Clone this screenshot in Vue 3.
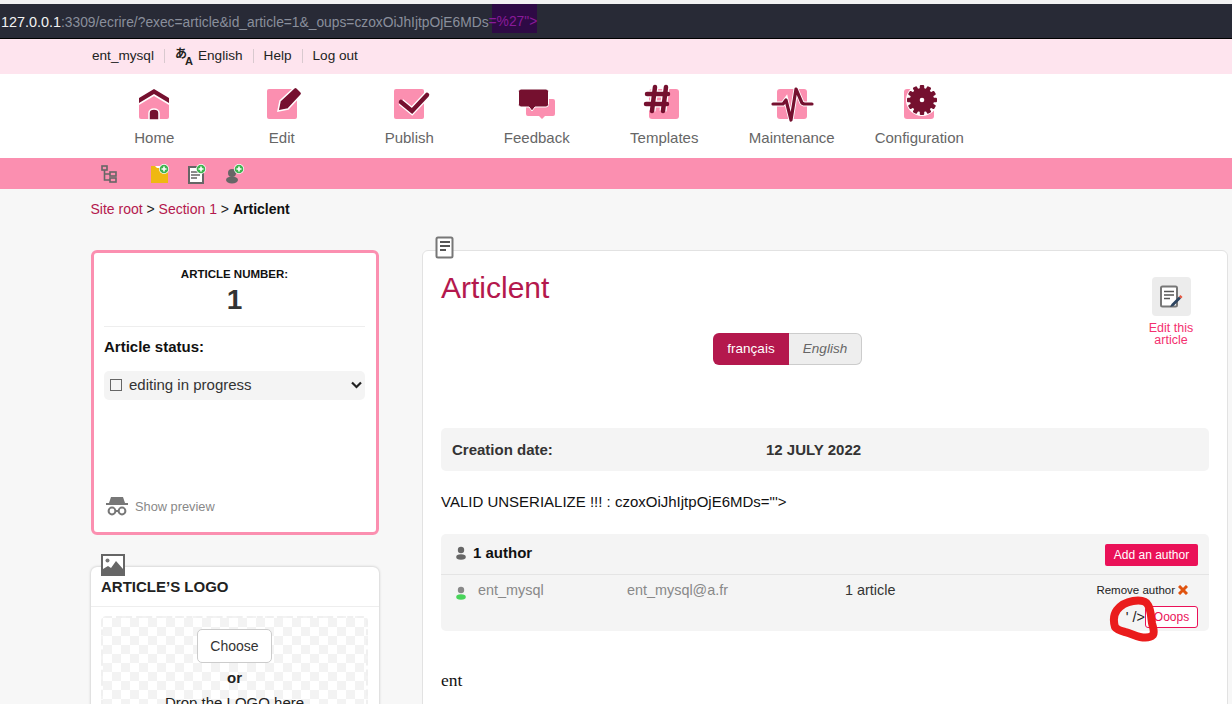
<script setup>
const menu = [
  { label: 'Home', icon: 'home' },
  { label: 'Edit', icon: 'edit' },
  { label: 'Publish', icon: 'publish' },
  { label: 'Feedback', icon: 'feedback' },
  { label: 'Templates', icon: 'templates' },
  { label: 'Maintenance', icon: 'maintenance' },
  { label: 'Configuration', icon: 'config' },
];

const gearTeeth = [0, 30, 60, 90, 120, 150];
</script>

<template>
  <div class="page">
    <div class="urlbar">
      <span class="url-host">127.0.0.1</span><span class="url-rest">:3309/ecrire/?exec=article&amp;id_article=1&amp;_oups=czoxOiJhIjtpOjE6MDs</span><span class="url-mark">=%27"&gt;</span>
    </div>

    <div class="topbar">
      <span class="top-item">ent_mysql</span>
      <span class="top-item">
        <svg class="lang-icon" width="20" height="24" viewBox="0 0 20 24">
          <text x="0" y="14" font-size="12" font-weight="700" fill="#222" font-family="Noto Sans CJK JP, sans-serif">あ</text>
          <text x="10" y="21" font-size="11" font-weight="700" fill="#222" font-family="Liberation Sans, sans-serif">A</text>
        </svg>
        English
      </span>
      <span class="top-item">Help</span>
      <span class="top-item last">Log out</span>
    </div>

    <nav class="mainnav">
      <div v-for="item in menu" :key="item.label" class="nav-item">
        <svg class="nav-icon" width="48" height="40" viewBox="0 0 48 40">
          <template v-if="item.icon === 'home'">
            <path d="M9 23 24 14l15 9v12a2 2 0 0 1-2 2H11a2 2 0 0 1-2-2z" fill="#fb8fb0" />
            <path d="M9 16 24 7l15 9v5L24 12 9 21z" fill="#75102f" />
            <path d="M19 38V31a5 4 0 0 1 10 0v7z" fill="#75102f" stroke="#fff" stroke-width="1.500" />
          </template>
          <template v-else-if="item.icon === 'edit'">
            <rect x="9" y="7" width="30" height="30" rx="2" fill="#fb8fb0" />
            <path d="M20 29l2-10L36 6c1-1 2-1 3 0l4 4c1 1 1 2 0 3L30 27z" fill="#75102f" stroke="#fff" stroke-width="1.500" />
          </template>
          <template v-else-if="item.icon === 'publish'">
            <rect x="9" y="7" width="30" height="30" rx="2" fill="#fb8fb0" />
            <path d="M16 20l11 9 15-16" fill="none" stroke="#fff" stroke-width="7" />
            <path d="M16 20l11 9 15-16" fill="none" stroke="#75102f" stroke-width="4.500" stroke-linecap="round" />
          </template>
          <template v-else-if="item.icon === 'feedback'">
            <path d="M15 17h25a2 2 0 0 1 2 2v13a2 2 0 0 1-2 2h-8l-3 3-3-3H15a2 2 0 0 1-2-2V19z" fill="#fb8fb0" />
            <path d="M8 7h25a2.500 2.500 0 0 1 2.500 2.500v13a2.500 2.500 0 0 1-2.500 2.500H22l-3 4-3-4H8a2.500 2.500 0 0 1-2.500-2.500v-13A2.500 2.500 0 0 1 8 7z" fill="#75102f" stroke="#fff" stroke-width="1" />
          </template>
          <template v-else-if="item.icon === 'templates'">
            <rect x="9" y="7" width="30" height="30" rx="3" fill="#fb8fb0" />
            <path d="M15 5l-3 24M26 5l-3 24M7 12h21M6 22h21" fill="none" stroke="#fff" stroke-width="7" />
            <path d="M15 5l-3 24M26 5l-3 24M7 12h21M6 22h21" fill="none" stroke="#75102f" stroke-width="4.500" stroke-linecap="round" />
          </template>
          <template v-else-if="item.icon === 'maintenance'">
            <rect x="9" y="7" width="30" height="30" rx="3" fill="#fb8fb0" />
            <path d="M5 22h10l3-4 5 20 5-31 6 14 2 1h8" fill="none" stroke="#fff" stroke-width="5" />
            <path d="M5 22h10l3-4 5 20 5-31 6 14 2 1h8" fill="none" stroke="#75102f" stroke-width="3.200" stroke-linecap="round" stroke-linejoin="round" />
          </template>
          <template v-else>
            <rect x="9" y="7" width="30" height="30" rx="3" fill="#fb8fb0" />
            <g transform="translate(27 18)">
              <circle r="16" fill="#fff" />
              <rect v-for="a in gearTeeth" :key="a" x="-2.200" y="-15" width="4.400" height="30" rx="1" fill="#75102f" :transform="`rotate(${a})`" />
              <circle r="12" fill="#75102f" />
              <circle r="2.300" fill="#fff" />
            </g>
          </template>
        </svg>
        <span class="nav-label">{{ item.label }}</span>
      </div>
    </nav>

    <div class="quickbar">
      <svg class="qb-tree" width="18" height="18" viewBox="0 0 18 18" fill="none" stroke="#666" stroke-width="1.600">
        <rect x="2" y="1" width="5" height="4" />
        <rect x="10" y="7" width="6" height="4" />
        <rect x="10" y="13" width="6" height="4" />
        <path d="M4.500 5v10H10M4.500 9H10" />
      </svg>
      <svg class="qb-section" width="20" height="20" viewBox="0 0 20 20">
        <path d="M1 2h17v17H1z" fill="#efb811" />
        <path d="M5 2h7v2H7z" fill="#fff" />
        <circle cx="14" cy="5" r="5" fill="#fff" />
        <circle cx="14" cy="5" r="4.300" fill="#3fb34f" />
        <path d="M14 2.500v5M11.500 5h5" stroke="#fff" stroke-width="1.600" />
      </svg>
      <svg class="qb-article" width="20" height="20" viewBox="0 0 20 20">
        <rect x="2" y="3" width="14" height="16" fill="#fff" stroke="#666" stroke-width="2" />
        <path d="M4 8h9M4 11h9M4 14h6" stroke="#666" stroke-width="1.600" />
        <circle cx="14" cy="5" r="5" fill="#fff" />
        <circle cx="14" cy="5" r="4.300" fill="#3fb34f" />
        <path d="M14 2.500v5M11.500 5h5" stroke="#fff" stroke-width="1.600" />
      </svg>
      <svg class="qb-author" width="20" height="20" viewBox="0 0 20 20">
        <circle cx="7" cy="9" r="4" fill="#666" />
        <ellipse cx="7" cy="16" rx="6" ry="3.400" fill="#666" />
        <circle cx="14" cy="5" r="5" fill="#fff" />
        <circle cx="14" cy="5" r="4.300" fill="#3fb34f" />
        <path d="M14 2.500v5M11.500 5h5" stroke="#fff" stroke-width="1.600" />
      </svg>
    </div>

    <div class="crumbs">
      <a>Site root</a> &gt; <a>Section 1</a> &gt; <strong>Articlent</strong>
    </div>

    <div class="columns">
      <aside class="sidebar">
        <div class="status-box">
          <div class="num-label">ARTICLE NUMBER:</div>
          <div class="num-value">1</div>
          <div class="status-title">Article status:</div>
          <div class="status-select">
            <span class="check"></span>
            <span class="select-text">editing in progress</span>
            <svg width="11" height="8" viewBox="0 0 11 8" fill="none" stroke="#222" stroke-width="2.200">
              <path d="M1 1.500l4.500 4.500L10 1.500" />
            </svg>
          </div>
          <div class="preview">
            <svg width="22" height="20" viewBox="0 0 22 20">
              <path d="M5 1h12l2 6H3z" fill="#777" />
              <rect x="0" y="7" width="22" height="2" fill="#777" />
              <g fill="none" stroke="#777" stroke-width="2">
                <circle cx="6" cy="15" r="3.400" />
                <circle cx="16" cy="15" r="3.400" />
                <path d="M9.500 15h3" />
              </g>
            </svg>
            <span>Show preview</span>
          </div>
        </div>

        <div class="logo-box">
          <svg class="logo-badge" width="24" height="22" viewBox="0 0 24 22">
            <rect x="1" y="1" width="22" height="20" fill="#fff" stroke="#666" stroke-width="2" />
            <circle cx="6.500" cy="6.500" r="2" fill="#777" />
            <path d="M2 15l5-3 3 2 5-7 7 8v5H2z" fill="#666" />
          </svg>
          <div class="logo-title">ARTICLE’S LOGO</div>
          <div class="logo-body">
            <div class="drop">
              <button class="choose">Choose</button>
              <div class="or">or</div>
              <div class="drop-text">Drop the LOGO here</div>
            </div>
          </div>
        </div>
      </aside>

      <main class="article">
        <svg class="article-badge" width="20" height="23" viewBox="0 0 20 23">
          <rect x="1.500" y="1.500" width="16" height="20" rx="1.500" fill="#fff" stroke="#777" stroke-width="2" />
          <path d="M5 6h10M5 10h10M5 14h6" stroke="#555" stroke-width="1.800" />
        </svg>

        <div class="article-head">
          <h1>Articlent</h1>
          <div class="edit-link">
            <div class="edit-icon">
              <svg width="24" height="24" viewBox="0 0 24 24">
                <rect x="2" y="1.500" width="16" height="20" rx="1.500" fill="#fff" stroke="#777" stroke-width="2" />
                <path d="M5 6.500h10M5 10h10M5 13.500h6" stroke="#555" stroke-width="1.600" />
                <path d="M11 22l1.500-3 7.500-7.500 2 2-7.500 7.500z" fill="#2c4460" />
                <path d="M20 11.500l1.500-1.500 2 2-1.500 1.500z" fill="#e5533d" />
              </svg>
            </div>
            <span>Edit this article</span>
          </div>
        </div>

        <div class="langs">
          <span class="lang active">français</span><span class="lang other">English</span>
        </div>

        <div class="date-row">
          <span class="date-label">Creation date:</span>
          <span class="date-value">12 JULY 2022</span>
        </div>

        <p class="valid">VALID UNSERIALIZE !!! : czoxOiJhIjtpOjE6MDs="'&gt;</p>

        <section class="authors">
          <div class="authors-head">
            <div class="authors-title">
              <svg width="12" height="14" viewBox="0 0 12 14" fill="#666">
                <circle cx="6" cy="4" r="3.200" />
                <ellipse cx="6" cy="11" rx="4.800" ry="2.800" />
              </svg>
              <strong>1 author</strong>
            </div>
            <button class="add-author">Add an author</button>
          </div>
          <div class="author-row">
            <svg class="author-dot" width="12" height="14" viewBox="0 0 12 14">
              <circle cx="6" cy="4" r="3.200" fill="#888" />
              <ellipse cx="6" cy="11" rx="4.800" ry="2.800" fill="#48d45a" />
            </svg>
            <span class="author-name">ent_mysql</span>
            <span class="author-mail">ent_mysql@a.fr</span>
            <span class="author-count">1 article</span>
            <div class="author-actions">
              <span class="remove">Remove author
                <svg width="10" height="10" viewBox="0 0 10 10" stroke="#e0530f" stroke-width="3">
                  <path d="M1 1l8 8M9 1l-8 8" />
                </svg>
              </span>
              <span class="oops-line"><span class="leak">' /&gt;</span><button class="oops">Ooops</button></span>
            </div>
          </div>
        </section>

        <p class="body-text">ent</p>
      </main>
    </div>

    <!-- annotation drawn by hand over the screenshot -->
    <svg class="scribble" width="52" height="50" viewBox="0 0 52 50" fill="none">
      <path d="M6 31C4 24 5 18 8 14 12 9 18 6 24 5c7-1 13 0 15 4 3 5 3 12 4 18 1 5 3 9 1 12-3 3-8 3-13 2-5-1-10-4-15-5-4-1-8-2-10-5z" stroke="#ea1c1c" stroke-width="8" stroke-linejoin="round" />
    </svg>
  </div>
</template>

<style scoped>
.page {
  position: relative;
  width: 1232px;
  height: 704px;
  overflow: hidden;
  background: #f7f7f7;
  font-family: 'Liberation Sans', Arial, sans-serif;
  color: #222;
}

.urlbar {
  box-sizing: border-box;
  height: 39px;
  padding: 8px 0 0 1px;
  border-top: 4px solid #f2f2f2;
  border-bottom: 1px solid #000;
  background: #282a36;
  font-size: 14.400px;
  line-height: 20px;
  white-space: nowrap;
}
.url-host {
  color: #f2f2f2;
}
.url-rest {
  color: #8a8f9c;
  font-size: 13.800px;
}
.url-mark {
  display: inline-block;
  box-sizing: border-box;
  height: 29px;
  margin-top: -8px;
  padding-top: 8px;
  vertical-align: top;
  background: linear-gradient(90deg, transparent 3px, #2e0a45 3px);
  color: #8a1a9a;
  font-size: 13.800px;
}

.topbar {
  display: flex;
  align-items: center;
  box-sizing: border-box;
  height: 35px;
  padding: 0 0 2px 92px;
  background: #fee4ee;
  font-size: 13.600px;
}
.top-item {
  display: flex;
  align-items: center;
  gap: 3px;
  padding-right: 10px;
  margin-right: 10px;
  border-right: 1px solid #d9c9cf;
  line-height: 14px;
}
.top-item.last {
  border-right: 0;
}
.lang-icon {
  margin: -5px 0;
}

.mainnav {
  display: flex;
  height: 84px;
  padding-left: 90.500px;
  background: #fff;
}
.nav-item {
  display: flex;
  flex-direction: column;
  align-items: center;
  width: 127.500px;
  padding-top: 8px;
}
.nav-label {
  margin-top: 7px;
  font-size: 15px;
  line-height: 17px;
  color: #666;
}

.quickbar {
  display: flex;
  align-items: center;
  height: 31px;
  padding-left: 100px;
  background: #fb8fb0;
}
.qb-section {
  margin-left: 32px;
}
.qb-article {
  margin-left: 17px;
}
.qb-author {
  margin-left: 18px;
}

.crumbs {
  padding: 12px 0 0 90.500px;
  font-size: 14px;
  line-height: 16px;
}
.crumbs a {
  color: #b4184d;
}
.crumbs strong {
  color: #111;
}

.columns {
  display: flex;
  gap: 43px;
  padding: 33px 4px 0 91px;
}

.sidebar {
  width: 288px;
  flex-shrink: 0;
}
.status-box {
  box-sizing: border-box;
  height: 285px;
  padding: 15px 11px 0 10px;
  border: 3px solid #fb8fb0;
  border-radius: 6px;
  background: #fff;
}
.num-label {
  font-size: 11.500px;
  font-weight: 700;
  line-height: 13px;
  text-align: center;
  color: #111;
}
.num-value {
  padding: 3px 0 11px;
  border-bottom: 1px solid #eee;
  font-size: 28px;
  font-weight: 700;
  line-height: 31px;
  text-align: center;
  color: #333;
}
.status-title {
  margin-top: 11px;
  font-size: 15px;
  font-weight: 700;
  line-height: 18px;
  color: #111;
}
.status-select {
  display: flex;
  align-items: center;
  height: 29px;
  margin-top: 15px;
  padding: 0 3px 2px 6px;
  box-sizing: border-box;
  border-radius: 5px;
  background: #f4f4f4;
}
.check {
  box-sizing: border-box;
  width: 12px;
  height: 12px;
  border: 1.500px solid #666;
}
.select-text {
  flex: 1;
  margin-left: 7px;
  font-size: 15px;
  color: #333;
}
.preview {
  display: flex;
  align-items: center;
  gap: 7px;
  margin-top: 96px;
  padding-left: 2px;
  font-size: 12.800px;
  color: #888;
}

.logo-box {
  position: relative;
  margin-top: 32px;
  border-radius: 6px;
  background: #fff;
  box-shadow: 0 0 3px rgba(0, 0, 0, 0.25);
}
.logo-badge {
  position: absolute;
  top: -13px;
  left: 10px;
}
.logo-title {
  padding: 11px 10px 11px;
  border-bottom: 1px solid #eee;
  font-size: 15px;
  font-weight: 700;
  line-height: 17px;
  color: #222;
}
.logo-body {
  padding: 9px 11px 20px 10px;
}
.drop {
  box-sizing: border-box;
  padding: 11px 0 30px;
  border: 2px dashed #f0f0f0;
  border-radius: 5px;
  text-align: center;
  background-color: #fff;
  background-image: conic-gradient(#f3f3f3 25%, #fff 0 50%, #f3f3f3 0 75%, #fff 0);
  background-size: 18px 18px;
}
.choose {
  box-sizing: border-box;
  width: 75px;
  height: 34px;
  border: 1px solid #ccc;
  border-radius: 5px;
  background: #fff;
  font: 14px 'Liberation Sans', Arial, sans-serif;
  color: #333;
}
.or {
  margin-top: 6px;
  font-size: 15px;
  font-weight: 700;
  line-height: 18px;
}
.drop-text {
  margin-top: 7px;
  font-size: 15px;
  line-height: 18px;
}

.article {
  position: relative;
  box-sizing: border-box;
  width: 806px;
  height: 600px;
  padding: 18px 18px 0;
  border: 1px solid #e2e2e2;
  border-radius: 6px;
  background: #fff;
}
.article-badge {
  position: absolute;
  top: -15px;
  left: 12px;
}
.article-head {
  display: flex;
  justify-content: space-between;
  align-items: flex-start;
}
h1 {
  margin: 1px 0 0;
  font-size: 30px;
  font-weight: 400;
  line-height: 36px;
  color: #b4184d;
}
.edit-link {
  width: 64px;
  margin: 8px 6px 0 0;
  text-align: center;
  font-size: 12.500px;
  line-height: 12px;
  color: #f4306f;
}
.edit-icon {
  display: flex;
  align-items: center;
  justify-content: center;
  width: 39px;
  height: 39px;
  margin: 0 auto 6px;
  border-radius: 4px;
  background: #ececec;
}

.langs {
  display: flex;
  justify-content: center;
  margin-top: -13px;
  padding-right: 75px;
}
.lang {
  box-sizing: border-box;
  height: 32px;
  font-size: 13.500px;
  line-height: 30px;
}
.lang.active {
  width: 76px;
  border-radius: 6px 0 0 6px;
  background: #b4184d;
  color: #fff;
  text-align: center;
  line-height: 32px;
}
.lang.other {
  width: 73px;
  border: 1px solid #ccc;
  border-left: 0;
  border-radius: 0 6px 6px 0;
  background: #eee;
  color: #666;
  font-style: italic;
  text-align: center;
}

.date-row {
  display: flex;
  align-items: center;
  height: 43px;
  margin-top: 63px;
  padding-left: 11px;
  border-radius: 5px;
  background: #f4f4f4;
  font-size: 15px;
  font-weight: 700;
  color: #333;
}
.date-label {
  width: 314px;
}

.valid {
  margin: 22px 0 0;
  font-size: 15px;
  line-height: 18px;
  color: #111;
}

.authors {
  margin-top: 23px;
  border-radius: 5px;
  background: #f4f4f4;
}
.authors-head {
  display: flex;
  justify-content: space-between;
  align-items: center;
  height: 40px;
  padding: 0 11px 0 14px;
  border-bottom: 1px solid #e4e4e4;
}
.authors-title {
  display: flex;
  align-items: center;
  gap: 6px;
  padding-bottom: 3px;
  font-size: 15px;
  color: #111;
}
.add-author {
  width: 93px;
  height: 22px;
  margin-top: 2px;
  padding: 0;
  border: 0;
  border-radius: 2px;
  background: #ea1158;
  color: #fff;
  font: 12px 'Liberation Sans', Arial, sans-serif;
}
.author-row {
  display: flex;
  box-sizing: border-box;
  height: 56px;
  padding: 7px 11px 0 14px;
  font-size: 14.400px;
  line-height: 16px;
}
.author-dot {
  margin-top: 4px;
  flex-shrink: 0;
}
.author-name {
  width: 149px;
  margin-left: 11px;
  color: #888;
}
.author-mail {
  width: 218px;
  color: #888;
}
.author-count {
  color: #333;
}
.author-actions {
  display: flex;
  flex-direction: column;
  align-items: flex-end;
  margin-left: auto;
}
.remove {
  display: flex;
  align-items: center;
  gap: 3px;
  font-size: 11.500px;
  line-height: 16px;
  padding-right: 10px;
}
.oops-line {
  display: flex;
  align-items: center;
  margin-top: 8px;
}
.leak {
  font-size: 14.400px;
}
.oops {
  width: 53px;
  height: 22px;
  padding: 0;
  border: 1px solid #ea1158;
  border-radius: 3px;
  background: #fff;
  color: #ea1158;
  font: 12px 'Liberation Sans', Arial, sans-serif;
}

.body-text {
  margin: 40px 0 0;
  font-family: 'Liberation Serif', serif;
  font-size: 17.500px;
  line-height: 18px;
  color: #111;
}

.scribble {
  position: absolute;
  top: 596px;
  left: 1109px;
}
</style>
